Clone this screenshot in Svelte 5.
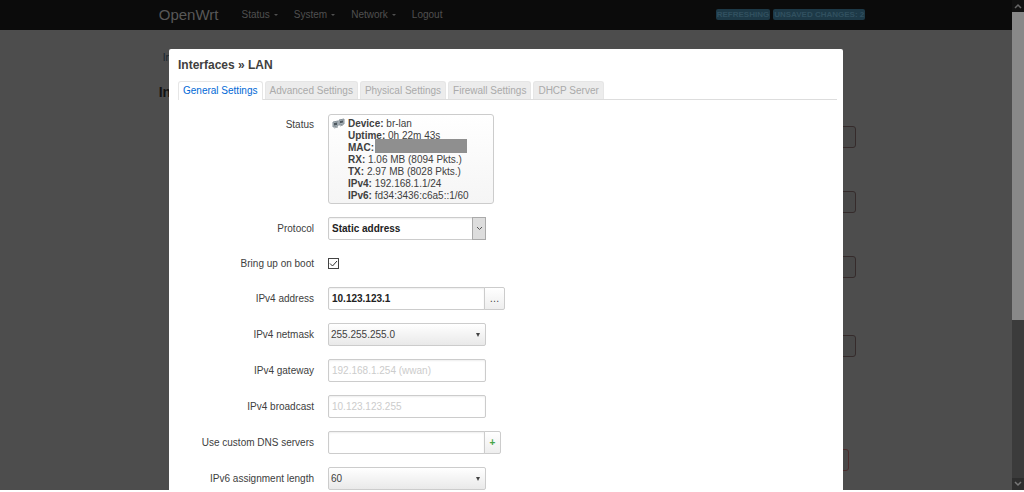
<script>
  let tab = $state('General Settings');
  let protocol = $state('Static address');
  let onBoot = $state(true);
  let address = $state('10.123.123.1');
  let netmask = $state('255.255.255.0');
  let gateway = $state('');
  let broadcast = $state('');
  let dns = $state('');
  let length = $state('60');

  const menu = [
    { name: 'Status', sub: true },
    { name: 'System', sub: true },
    { name: 'Network', sub: true },
    { name: 'Logout', sub: false }
  ];

  const tabs = [
    'General Settings',
    'Advanced Settings',
    'Physical Settings',
    'Firewall Settings',
    'DHCP Server'
  ];

  const status = [
    ['Device', 'br-lan'],
    ['Uptime', '0h 22m 43s'],
    ['MAC', ''],
    ['RX', '1.06 MB (8094 Pkts.)'],
    ['TX', '2.97 MB (8028 Pkts.)'],
    ['IPv4', '192.168.1.1/24'],
    ['IPv6', 'fd34:3436:c6a5::1/60']
  ];
</script>

<div class="page">
  <header>
    <div class="container bar">
      <a class="brand" href="#home">OpenWrt</a>
      <nav>
        {#each menu as item}
          <a href="#{item.name}">{item.name}{#if item.sub}<i class="caret"></i>{/if}</a>
        {/each}
      </nav>
      <div class="badges">
        <span class="badge">REFRESHING</span>
        <span class="badge">UNSAVED CHANGES: 2</span>
      </div>
    </div>
  </header>

  <!-- interface list behind the dialog -->
  <div class="container list" inert>
    <div class="crumb">Interfaces</div>
    <h2>Interfaces</h2>
    <div class="rows">
      <button aria-label="Delete"></button>
      <button aria-label="Delete"></button>
      <button aria-label="Delete"></button>
      <button class="far" aria-label="Delete"></button>
      <button class="last" aria-label="Add"></button>
    </div>
  </div>

  <div class="overlay">
    <div class="scroller">
      <div class="modal" role="dialog" aria-labelledby="title">
        <h4 id="title">Interfaces » LAN</h4>
        <div class="tabs">
          {#each tabs as name}
            <button class:active={tab === name} onclick={() => (tab = name)}>{name}</button>
          {/each}
        </div>

        <div class="row status-row">
          <span class="label">Status</span>
          <div class="status">
            <svg width="13" height="12" viewBox="0 0 13 12" aria-hidden="true">
              <path d="M1 4l5-1v5l-5 1z" fill="#aab4ba" stroke="#87929a" />
              <path d="M2 5l3-.6v2.6l-3 .6z" fill="#4d575e" />
              <path d="M7 2l5-1v5l-5 1z" fill="#aab4ba" stroke="#87929a" />
              <path d="M8 3l3-.6v2.2l-3 .6z" fill="#4d575e" />
              <path d="M2 10l4-1M8 8l3-1" stroke="#9aa3a8" />
            </svg>
            <div>
              {#each status as [key, value]}
                <div class="line">
                  <b>{key}:</b>
                  {#if value}{value}{:else}<span class="hidden"></span>{/if}
                </div>
              {/each}
            </div>
          </div>
        </div>

        <div class="row">
          <label for="protocol">Protocol</label>
          <div class="picker">
            <select id="protocol" class="field" bind:value={protocol}>
              <option>Static address</option>
              <option>DHCP client</option>
            </select>
            <span class="drop">
              <svg width="7" height="5" viewBox="0 0 7 5"><path d="M1 1l2.5 2.5L6 1" fill="none" stroke="#555" /></svg>
            </span>
          </div>
        </div>

        <div class="row boot">
          <label for="boot">Bring up on boot</label>
          <input id="boot" type="checkbox" bind:checked={onBoot} />
        </div>

        <div class="row">
          <label for="address">IPv4 address</label>
          <input id="address" class="field strong joined" type="text" bind:value={address} />
          <button class="add wide">…</button>
        </div>

        <div class="row">
          <label for="netmask">IPv4 netmask</label>
          <div class="picker">
            <select id="netmask" class="field shaded" bind:value={netmask}>
              <option>255.255.255.0</option>
              <option>255.255.0.0</option>
            </select>
            <i class="arrow"></i>
          </div>
        </div>

        <div class="row">
          <label for="gateway">IPv4 gateway</label>
          <input id="gateway" class="field" type="text" placeholder="192.168.1.254 (wwan)" bind:value={gateway} />
        </div>

        <div class="row">
          <label for="broadcast">IPv4 broadcast</label>
          <input id="broadcast" class="field" type="text" placeholder="10.123.123.255" bind:value={broadcast} />
        </div>

        <div class="row">
          <label for="dns">Use custom DNS servers</label>
          <input id="dns" class="field joined" type="text" bind:value={dns} />
          <button class="add plus">+</button>
        </div>

        <div class="row">
          <label for="length">IPv6 assignment length</label>
          <div class="picker">
            <select id="length" class="field shaded" bind:value={length}>
              <option>60</option>
              <option>64</option>
            </select>
            <i class="arrow"></i>
          </div>
        </div>
      </div>
    </div>

    <div class="scrollbar" aria-hidden="true">
      <svg width="12" height="12" viewBox="0 0 12 12"><path d="M3 8l3-3 3 3" fill="none" stroke="#666" stroke-width="1.5" /></svg>
      <div class="track"><div class="thumb"></div></div>
      <svg width="12" height="12" viewBox="0 0 12 12"><path d="M3 4l3 3 3-3" fill="none" stroke="#777" stroke-width="1.5" /></svg>
    </div>
  </div>
</div>

<style>
  :global(body) {
    background: #fff;
  }

  .page {
    position: relative;
    height: calc(100vh - 2px);
    overflow: hidden;
    background: #4d4d4d;
    color: #404040;
    font: 10px/12px "Liberation Sans", Arial, sans-serif;
  }

  .page * {
    box-sizing: border-box;
  }

  input,
  select,
  button {
    margin: 0;
    font: inherit;
    color: inherit;
  }

  .container {
    width: 69%;
    margin: 0 auto;
  }

  header {
    background: #0b0b0b;
  }

  .bar {
    display: flex;
    align-items: center;
    height: 30px;
  }

  .bar a {
    color: #505050;
    text-decoration: none;
  }

  .bar .brand {
    margin-right: 23px;
    color: #585858;
    font-size: 15px;
    line-height: 28px;
  }

  nav {
    display: flex;
    gap: 16px;
  }

  .caret {
    display: inline-block;
    margin-left: 4px;
    vertical-align: 2px;
    border: 2px solid transparent;
    border-top-color: #505050;
    border-bottom: 0;
  }

  .badges {
    display: flex;
    gap: 3px;
    margin-left: auto;
    padding-bottom: 2px;
  }

  .badge {
    padding: 0 1px;
    border-radius: 2px;
    background: #1d3947;
    color: #31505f;
    font-size: 8px;
    font-weight: bold;
    line-height: 11px;
  }

  .crumb {
    padding: 22px 4px 0;
    color: #16232e;
  }

  h2 {
    margin: 20px 0 0;
    color: #131313;
    font-size: 14px;
    line-height: 16px;
  }

  .rows {
    display: flex;
    flex-direction: column;
    align-items: flex-end;
    gap: 43px;
    padding: 26px 9px 0 0;
  }

  .rows button {
    flex: none;
    width: 40px;
    height: 22px;
    border: 1px solid #352b2b;
    border-radius: 3px;
    background: #484848;
  }

  .rows .far {
    margin-top: 14px;
  }

  .rows .last {
    margin: 49px 7px 0 0;
    border-color: #4a2c2c;
  }

  .overlay {
    position: absolute;
    inset: 0;
    display: flex;
  }

  .scroller {
    flex: 1;
    padding-top: 49px;
    overflow: hidden;
  }

  .modal {
    width: 66.6%;
    min-height: 100%;
    margin: 0 auto;
    padding: 8px 6px 8px 9px;
    border-radius: 2px 2px 0 0;
    background: #fff;
  }

  h4 {
    margin: 0 0 7px;
    font-size: 12px;
    line-height: 17px;
  }

  .tabs {
    display: flex;
    gap: 2px;
    margin-bottom: 14px;
    border-bottom: 1px solid #ddd;
  }

  .tabs button {
    height: 18px;
    padding: 0 4px;
    border: 1px solid #e6e6e6;
    border-bottom: 0;
    border-radius: 3px 3px 0 0;
    background: #ececec;
    color: #aaa;
  }

  .tabs .active {
    height: 19px;
    margin-bottom: -1px;
    background: #fff;
    color: #0069d6;
  }

  .row {
    display: flex;
    align-items: center;
    margin-bottom: 13px;
  }

  .row label,
  .label {
    width: 136px;
    margin-right: 14px;
    text-align: right;
  }

  .status-row {
    align-items: flex-start;
  }

  .label {
    padding-top: 5px;
  }

  .status {
    display: flex;
    gap: 3px;
    min-width: 166px;
    padding: 3px 3px 1px;
    border: 1px solid #ccc;
    border-radius: 3px;
    background: linear-gradient(#fff, #f5f5f5);
  }

  .hidden {
    display: inline-block;
    width: 92px;
    height: 14px;
    margin: -3px 0 1px -2px;
    vertical-align: bottom;
    background: #8f8f8f;
  }

  .field {
    display: block;
    width: 158px;
    height: 23px;
    padding: 0 3px;
    border: 1px solid #ccc;
    border-radius: 2px;
    outline: 0;
    appearance: none;
    background: #fff;
    box-shadow: inset 0 1px 2px #eee;
  }

  .field::placeholder {
    color: #ccc;
    opacity: 1;
  }

  .shaded {
    padding: 0 2px;
    background: linear-gradient(#fff, #e9e9e9);
    box-shadow: none;
  }

  .strong,
  #protocol {
    color: #222;
    font-weight: bold;
  }

  .picker {
    position: relative;
  }

  .drop,
  .arrow {
    position: absolute;
    pointer-events: none;
  }

  .drop {
    top: 0;
    right: 0;
    display: grid;
    place-items: center;
    width: 14px;
    height: 23px;
    border: 1px solid #aaa;
    background: #ddd;
  }

  .arrow {
    top: 10px;
    right: 6px;
    border: 2px solid transparent;
    border-top: 4px solid #444;
    border-bottom: 0;
  }

  .boot {
    height: 21px;
  }

  .boot input {
    width: 11px;
    height: 11px;
    border: 1px solid #444;
    appearance: none;
    background: #fff;
  }

  .boot input:checked {
    background: url("data:image/svg+xml,%3Csvg xmlns='http://www.w3.org/2000/svg' viewBox='0 0 9 9'%3E%3Cpath d='M1 4.5l2.5 2.5L8 2' fill='none' stroke='%23333'/%3E%3C/svg%3E");
  }

  .joined {
    width: 157px;
    border-radius: 2px 0 0 2px;
  }

  .add {
    width: 17px;
    height: 23px;
    margin-left: -1px;
    padding: 0;
    border: 1px solid #ccc;
    border-radius: 0 2px 2px 0;
    background: linear-gradient(#fff, #eee);
  }

  .wide {
    width: 21px;
  }

  .plus {
    color: #46a546;
    font-weight: bold;
  }

  .scrollbar {
    display: flex;
    flex-direction: column;
    width: 12px;
    background: #0b0b0b;
  }

  .scrollbar svg {
    background: #111;
  }

  .scrollbar svg:last-child {
    background: #2e2e2e;
  }

  .track {
    flex: 1;
    background: #3b3b3b;
  }

  .thumb {
    height: 66%;
    background: #888;
  }
</style>
